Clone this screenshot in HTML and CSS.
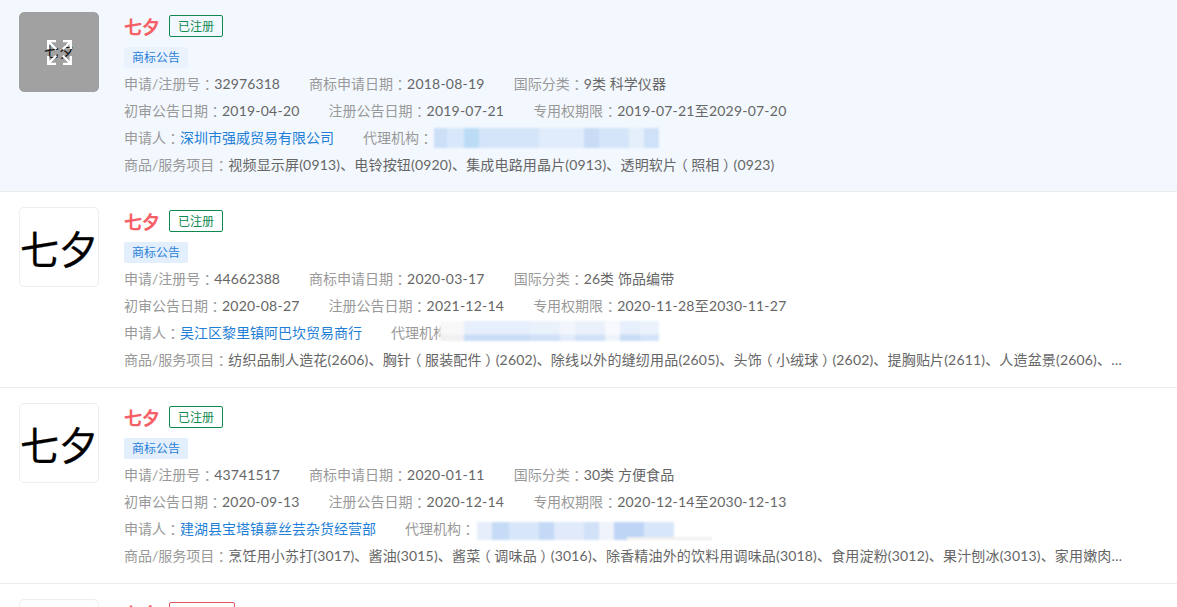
FILE: index.html
```html
<!DOCTYPE html>
<html lang="zh-CN">
<head>
<meta charset="utf-8">
<title>商标列表</title>
<link rel="stylesheet" href="styles.css">
</head>
<body>
<div class="list">
  <section class="row row-first">
    <div class="thumb thumb-hover">
      <span class="logo-small">七夕</span>
      <div class="thumb-overlay">
        <svg class="expand" width="25" height="25" viewBox="0 0 25 25" fill="none" stroke="#fff" stroke-width="2.300"><path d="M1.200 9V1.200H9M1.200 1.200l8 8M23.800 9V1.200H16M23.800 1.200l-8 8M1.200 16v7.800H9M1.200 23.800l8-8M23.800 16v7.800H16M23.800 23.800l-8-8"/></svg>
      </div>
    </div>
    <div class="main">
      <div class="head"><h3 class="name">七夕</h3><span class="status">已注册</span></div>
      <div class="notice">商标公告</div>
      <div class="info">
        <div class="line"><span class="item"><i>申请/注册号<u>：</u></i><b>32976318</b></span><span class="item"><i>商标申请日期<u>：</u></i><b class="date">2018-08-19</b></span><span class="item"><i>国际分类<u>：</u></i><b>9类 科学仪器</b></span></div>
        <div class="line"><span class="item"><i>初审公告日期<u>：</u></i><b class="date">2019-04-20</b></span><span class="item"><i>注册公告日期<u>：</u></i><b class="date">2019-07-21</b></span><span class="item"><i>专用权期限<u>：</u></i><b class="date">2019-07-21至2029-07-20</b></span></div>
        <div class="line"><span class="item"><i>申请人<u>：</u></i><a class="link" href="#">深圳市强威贸易有限公司</a></span><span class="item agent"><i>代理机构<u>：</u></i><span class="mask mask-a"></span></span></div>
        <div class="line goods"><i>商品/服务项目<u>：</u></i><b>视频显示屏(0913)、电铃按钮(0920)、集成电路用晶片(0913)、透明软片<u>（</u>照相<u>）</u>(0923)</b></div>
      </div>
    </div>
  </section>

  <section class="row">
    <div class="thumb"><span class="logo">七夕</span></div>
    <div class="main">
      <div class="head"><h3 class="name">七夕</h3><span class="status">已注册</span></div>
      <div class="notice">商标公告</div>
      <div class="info">
        <div class="line"><span class="item"><i>申请/注册号<u>：</u></i><b>44662388</b></span><span class="item"><i>商标申请日期<u>：</u></i><b class="date">2020-03-17</b></span><span class="item"><i>国际分类<u>：</u></i><b>26类 饰品编带</b></span></div>
        <div class="line"><span class="item"><i>初审公告日期<u>：</u></i><b class="date">2020-08-27</b></span><span class="item"><i>注册公告日期<u>：</u></i><b class="date">2021-12-14</b></span><span class="item"><i>专用权期限<u>：</u></i><b class="date">2020-11-28至2030-11-27</b></span></div>
        <div class="line"><span class="item"><i>申请人<u>：</u></i><a class="link" href="#">吴江区黎里镇阿巴坎贸易商行</a></span><span class="item agent"><i>代理机构<u>：</u></i><span class="mask mask-b"></span></span></div>
        <div class="line goods"><i>商品/服务项目<u>：</u></i><b>纺织品制人造花(2606)、胸针<u>（</u>服装配件<u>）</u>(2602)、除线以外的缝纫用品(2605)、头饰<u>（</u>小绒球<u>）</u>(2602)、提胸贴片(2611)、人造盆景(2606)、人造花环(2606)、假发(2604)</b></div>
      </div>
    </div>
  </section>

  <section class="row">
    <div class="thumb"><span class="logo">七夕</span></div>
    <div class="main">
      <div class="head"><h3 class="name">七夕</h3><span class="status">已注册</span></div>
      <div class="notice">商标公告</div>
      <div class="info">
        <div class="line"><span class="item"><i>申请/注册号<u>：</u></i><b>43741517</b></span><span class="item"><i>商标申请日期<u>：</u></i><b class="date">2020-01-11</b></span><span class="item"><i>国际分类<u>：</u></i><b>30类 方便食品</b></span></div>
        <div class="line"><span class="item"><i>初审公告日期<u>：</u></i><b class="date">2020-09-13</b></span><span class="item"><i>注册公告日期<u>：</u></i><b class="date">2020-12-14</b></span><span class="item"><i>专用权期限<u>：</u></i><b class="date">2020-12-14至2030-12-13</b></span></div>
        <div class="line"><span class="item"><i>申请人<u>：</u></i><a class="link" href="#">建湖县宝塔镇慕丝芸杂货经营部</a></span><span class="item agent"><i>代理机构<u>：</u></i><span class="mask mask-c"></span></span></div>
        <div class="line goods"><i>商品/服务项目<u>：</u></i><b>烹饪用小苏打(3017)、酱油(3015)、酱菜<u>（</u>调味品<u>）</u>(3016)、除香精油外的饮料用调味品(3018)、食用淀粉(3012)、果汁刨冰(3013)、家用嫩肉剂(3017)、调味品(3016)</b></div>
      </div>
    </div>
  </section>

  <section class="row">
    <div class="thumb"><span class="logo">七夕</span></div>
    <div class="main">
      <div class="head"><h3 class="name">七夕</h3><span class="status status-red">注册申请</span></div>
    </div>
  </section>
</div>
</body>
</html>
```
FILE: styles.css
```css
* { box-sizing: border-box; }
html, body { margin: 0; padding: 0; background: #fff; }
body { font-family: "Lato", "Noto Sans CJK SC", sans-serif; font-size: 14px; color: #666; }
.list { height: 100vh; overflow: hidden; }
.row { display: flex; padding: 15px 19px 13px; border-bottom: 1px solid #ebebeb; }
.row-first { background: #f3f8fe; padding-top: 12px; padding-bottom: 12px; }
.thumb { position: relative; flex: none; width: 80px; height: 80px; border: 1px solid #eee; border-radius: 5px; background: #fff; display: flex; align-items: center; justify-content: center; overflow: hidden; }
.thumb-hover { border-color: #a0a0a0; }
.logo { font-family: "Noto Sans CJK SC", sans-serif; font-size: 39px; font-weight: 400; -webkit-text-stroke: .3px #000; line-height: 1; color: #000; white-space: nowrap; }
.logo-small { font-family: "Noto Sans CJK SC", sans-serif; font-size: 15px; line-height: 1; color: #222; white-space: nowrap; margin-top: -4px; }
.thumb-overlay { position: absolute; inset: 0; background: rgba(0, 0, 0, .37); display: flex; align-items: center; justify-content: center; }
.expand { display: block; }
.main { flex: 1; min-width: 0; margin-left: 25px; }
.head { display: flex; align-items: center; margin-top: 3px; height: 22px; }
.name { margin: 0; font-size: 18px; line-height: 22px; font-weight: 700; color: #f56066; font-family: "Noto Sans CJK SC", sans-serif; }
.status { margin-left: 9px; height: 22px; padding: 0 8px; border: 1px solid #10894e; border-radius: 2px; font-size: 12px; line-height: 20px; color: #10894e; font-family: "Noto Sans CJK SC", sans-serif; }
.status-red { border-color: #e2525a; color: #e2525a; }
.notice { width: 64px; height: 21px; margin-top: 10px; background: #e3effc; border-radius: 2px; font-size: 12px; line-height: 20px; text-align: center; color: #2b7fd9; font-family: "Noto Sans CJK SC", sans-serif; }
.row-first .notice { background: #eaf3fd; }
.info { margin-top: 2px; margin-bottom: 1px; width: 1000px; }
.line { display: flex; gap: 29px; height: 27px; line-height: 27px; white-space: nowrap; }
.line i { font-style: normal; color: #999; }
.line b { font-weight: 400; color: #666; letter-spacing: .1px; }
.line b.date { letter-spacing: .22px; }
.line u { display: inline-block; width: 1em; text-align: center; text-decoration: none; font-feature-settings: "halt"; letter-spacing: 0; }
.link { color: #1f7fd6; text-decoration: none; }
.agent { position: relative; }
.goods { display: block; overflow: hidden; text-overflow: ellipsis; }
.goods b { letter-spacing: .17px; }
.mask { position: absolute; height: 20px; filter: blur(1px); }
.mask-a { top: 4px; left: 71px; width: 225px; background: linear-gradient(90deg, #cbdff7 0 13px, #d8e8fa 13px 30px, #bcdcf6 30px 45px, #d4e5f9 45px 105px, #e0ecfb 105px 150px, #c8dcf6 150px 165px, #d5e5f9 165px 195px, #e4effb 195px 210px, #cfe1f8 210px 225px); }
.mask-b { top: 2px; left: 49px; width: 219px; background: linear-gradient(180deg, rgba(255,255,255,.55) 0 65%, rgba(255,255,255,0) 72%), linear-gradient(90deg, #f1f1f3 0 24px, #c8dcf6 24px 90px, #cfe0f7 90px 120px, #e2ecfa 120px 135px, #d0e1f7 135px 165px, #eef3fb 165px 180px, #c8dcf6 180px 200px, #d3e3f8 200px 219px); }
.mask-c { top: 7px; height: 18px; left: 72px; width: 197px; background: linear-gradient(90deg, #e6eefb 0 15px, #c6dcf6 15px 32px, #d8e6fa 32px 62px, #c4d9f6 62px 77px, #e0eafb 77px 107px, #d0e1f8 107px 122px, #eff3fb 122px 137px, #bfd5f6 137px 167px, #d8e6fa 167px 197px); }
.mask-c::after { content: ""; position: absolute; left: 150px; top: 15px; width: 85px; height: 3px; background: #f0f0f0; }
```
